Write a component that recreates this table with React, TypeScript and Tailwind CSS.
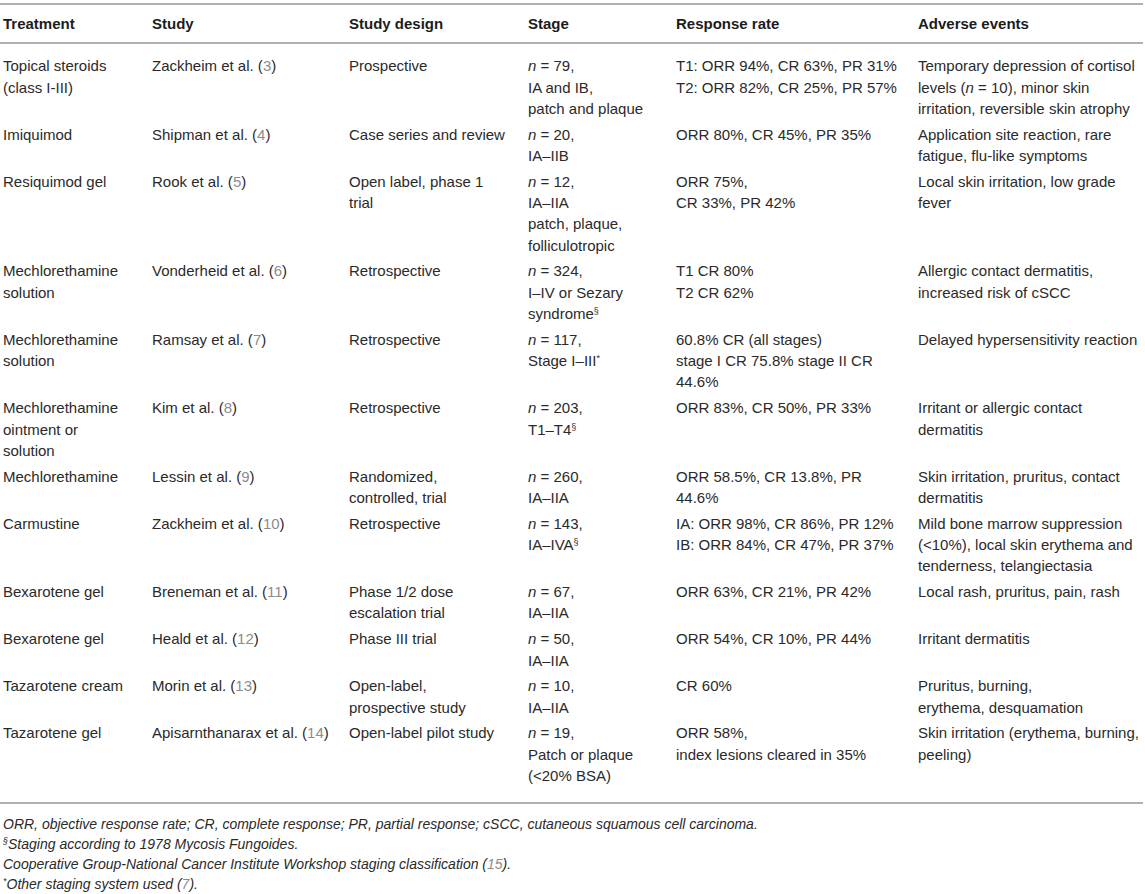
import type { ReactNode } from 'react';

const Ref = ({ n }: { n: number }) => <span className="text-[#8c8c8c]">{n}</span>;
const N = ({ v }: { v: string }) => (
  <>
    <i>n</i> = {v},
  </>
);
// raised mark that doesn't stretch the line box
const Sup = ({ c }: { c: string }) => <span className="relative -top-[5px] text-[9px] leading-none">{c}</span>;

type Row = {
  t: ReactNode[];
  s: ReactNode;
  d: ReactNode[];
  st: ReactNode[];
  r: ReactNode[];
  a: ReactNode[];
};

const rows: Row[] = [
  {
    t: ['Topical steroids', '(class I-III)'],
    s: <>Zackheim et al. (<Ref n={3} />)</>,
    d: ['Prospective'],
    st: [<N v="79" />, 'IA and IB,', 'patch and plaque'],
    r: ['T1: ORR 94%, CR 63%, PR 31%', 'T2: ORR 82%, CR 25%, PR 57%'],
    a: ['Temporary depression of cortisol', <>levels (<i>n</i> = 10), minor skin</>, 'irritation, reversible skin atrophy'],
  },
  {
    t: ['Imiquimod'],
    s: <>Shipman et al. (<Ref n={4} />)</>,
    d: ['Case series and review'],
    st: [<N v="20" />, 'IA–IIB'],
    r: ['ORR 80%, CR 45%, PR 35%'],
    a: ['Application site reaction, rare', 'fatigue, flu-like symptoms'],
  },
  {
    t: ['Resiquimod gel'],
    s: <>Rook et al. (<Ref n={5} />)</>,
    d: ['Open label, phase 1', 'trial'],
    st: [<N v="12" />, 'IA–IIA', 'patch, plaque,', 'folliculotropic'],
    r: ['ORR 75%,', 'CR 33%, PR 42%'],
    a: ['Local skin irritation, low grade', 'fever'],
  },
  {
    t: ['Mechlorethamine', 'solution'],
    s: <>Vonderheid et al. (<Ref n={6} />)</>,
    d: ['Retrospective'],
    st: [<N v="324" />, 'I–IV or Sezary', <>syndrome<Sup c="§" /></>],
    r: ['T1 CR 80%', 'T2 CR 62%'],
    a: ['Allergic contact dermatitis,', 'increased risk of cSCC'],
  },
  {
    t: ['Mechlorethamine', 'solution'],
    s: <>Ramsay et al. (<Ref n={7} />)</>,
    d: ['Retrospective'],
    st: [<N v="117" />, <>Stage I–III<Sup c="*" /></>],
    r: ['60.8% CR (all stages)', 'stage I CR 75.8% stage II CR', '44.6%'],
    a: ['Delayed hypersensitivity reaction'],
  },
  {
    t: ['Mechlorethamine', 'ointment or', 'solution'],
    s: <>Kim et al. (<Ref n={8} />)</>,
    d: ['Retrospective'],
    st: [<N v="203" />, <>T1–T4<Sup c="§" /></>],
    r: ['ORR 83%, CR 50%, PR 33%'],
    a: ['Irritant or allergic contact', 'dermatitis'],
  },
  {
    t: ['Mechlorethamine'],
    s: <>Lessin et al. (<Ref n={9} />)</>,
    d: ['Randomized,', 'controlled, trial'],
    st: [<N v="260" />, 'IA–IIA'],
    r: ['ORR 58.5%, CR 13.8%, PR', '44.6%'],
    a: ['Skin irritation, pruritus, contact', 'dermatitis'],
  },
  {
    t: ['Carmustine'],
    s: <>Zackheim et al. (<Ref n={10} />)</>,
    d: ['Retrospective'],
    st: [<N v="143" />, <>IA–IVA<Sup c="§" /></>],
    r: ['IA: ORR 98%, CR 86%, PR 12%', 'IB: ORR 84%, CR 47%, PR 37%'],
    a: ['Mild bone marrow suppression', '(<10%), local skin erythema and', 'tenderness, telangiectasia'],
  },
  {
    t: ['Bexarotene gel'],
    s: <>Breneman et al. (<Ref n={11} />)</>,
    d: ['Phase 1/2 dose', 'escalation trial'],
    st: [<N v="67" />, 'IA–IIA'],
    r: ['ORR 63%, CR 21%, PR 42%'],
    a: ['Local rash, pruritus, pain, rash'],
  },
  {
    t: ['Bexarotene gel'],
    s: <>Heald et al. (<Ref n={12} />)</>,
    d: ['Phase III trial'],
    st: [<N v="50" />, 'IA–IIA'],
    r: ['ORR 54%, CR 10%, PR 44%'],
    a: ['Irritant dermatitis'],
  },
  {
    t: ['Tazarotene cream'],
    s: <>Morin et al. (<Ref n={13} />)</>,
    d: ['Open-label,', 'prospective study'],
    st: [<N v="10" />, 'IA–IIA'],
    r: ['CR 60%'],
    a: ['Pruritus, burning,', 'erythema, desquamation'],
  },
  {
    t: ['Tazarotene gel'],
    s: <>Apisarnthanarax et al. (<Ref n={14} />)</>,
    d: ['Open-label pilot study'],
    st: [<N v="19" />, 'Patch or plaque', '(<20% BSA)'],
    r: ['ORR 58%,', 'index lesions cleared in 35%'],
    a: ['Skin irritation (erythema, burning,', 'peeling)'],
  },
];

const Lines = ({ items }: { items: ReactNode[] }) => (
  <>
    {items.map((l, i) => (
      <div key={i} className="whitespace-nowrap">
        {l}
      </div>
    ))}
  </>
);

const headers = ['Treatment', 'Study', 'Study design', 'Stage', 'Response rate', 'Adverse events'];

const App = () => {
  return (
    <div className="w-[1145px] min-h-[894px] bg-white pt-[3px] font-['Liberation_Sans',Arial,sans-serif] text-[15px] leading-[21.3px] text-[#2a2a2a]">
      <table className="w-[1143px] table-fixed border-collapse">
        <colgroup>
          <col className="w-[149px]" />
          <col className="w-[197px]" />
          <col className="w-[179px]" />
          <col className="w-[148px]" />
          <col className="w-[242px]" />
          <col className="w-[228px]" />
        </colgroup>
        <thead>
          <tr className="border-y-2 border-[#b0b0b0]">
            {headers.map((h) => (
              <th key={h} className="pl-[3px] pt-[8px] pb-[8px] text-left align-top font-bold text-[#1c1c1c]">
                {h}
              </th>
            ))}
          </tr>
        </thead>
        <tbody>
          {rows.map((row, i) => {
            const pad = i === 0 ? 'pt-[11px]' : 'pt-[2.5px]';
            const bottom = i === rows.length - 1 ? 'pb-[16px]' : 'pb-[2px]';
            const cell = `pl-[3px] align-top ${pad} ${bottom}`;
            return (
              <tr key={i} className={i === rows.length - 1 ? 'border-b-2 border-[#b0b0b0]' : ''}>
                <td className={cell}><Lines items={row.t} /></td>
                <td className={cell}><div className="whitespace-nowrap">{row.s}</div></td>
                <td className={cell}><Lines items={row.d} /></td>
                <td className={cell}><Lines items={row.st} /></td>
                <td className={cell}><Lines items={row.r} /></td>
                <td className={cell}><Lines items={row.a} /></td>
              </tr>
            );
          })}
        </tbody>
      </table>

      {/* Footnotes */}
      <div className="pl-[3px] pt-[10px] text-[14px] leading-[20px] italic">
        <p>ORR, objective response rate; CR, complete response; PR, partial response; cSCC, cutaneous squamous cell carcinoma.</p>
        <p>
          <Sup c="§" />Staging according to 1978 Mycosis Fungoides.
        </p>
        <p>
          Cooperative Group-National Cancer Institute Workshop staging classification (<Ref n={15} />).
        </p>
        <p>
          <Sup c="*" />Other staging system used (<Ref n={7} />).
        </p>
      </div>
    </div>
  );
};

export default App;
